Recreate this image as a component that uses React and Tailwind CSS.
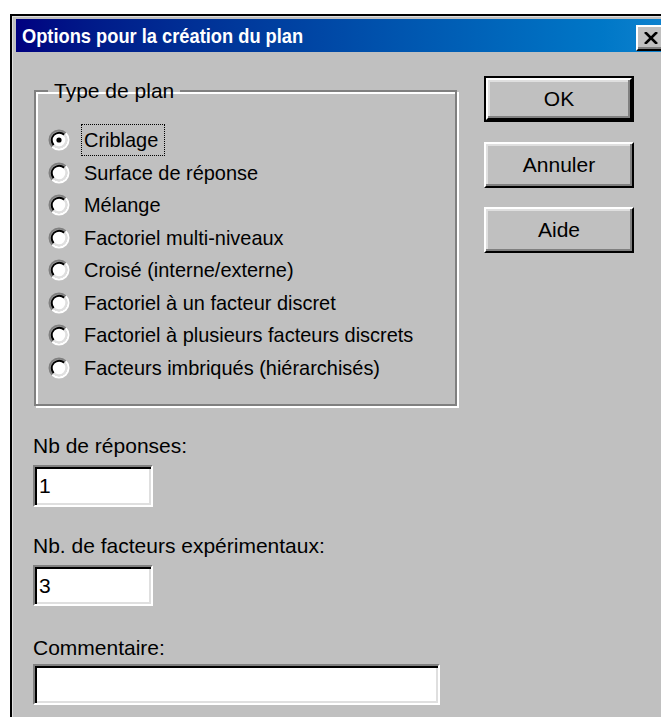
import { useState } from 'react'

const planTypes = [
  'Criblage',
  'Surface de réponse',
  'Mélange',
  'Factoriel multi-niveaux',
  'Croisé (interne/externe)',
  'Factoriel à un facteur discret',
  'Factoriel à plusieurs facteurs discrets',
  'Facteurs imbriqués (hiérarchisés)',
]

function RadioDot({ checked }) {
  return (
    <svg width="22" height="22" viewBox="0 0 22 22" className="shrink-0">
      <circle cx="11" cy="11" r="8" fill="#fff" />
      <path d="M4.28 17.72 A9.5 9.5 0 0 1 17.72 4.28" fill="none" stroke="#808080" strokeWidth="2" />
      <path d="M17.72 4.28 A9.5 9.5 0 0 1 4.28 17.72" fill="none" stroke="#fff" strokeWidth="2" />
      <path d="M5.7 16.3 A7.5 7.5 0 0 1 16.3 5.7" fill="none" stroke="#000" strokeWidth="2" />
      <path d="M16.3 5.7 A7.5 7.5 0 0 1 5.7 16.3" fill="none" stroke="#dfdfdf" strokeWidth="2" />
      {checked && <circle cx="11" cy="11" r="2.6" fill="#000" />}
    </svg>
  )
}

function Button({ children, isDefault }) {
  return (
    <div className={isDefault ? 'border-2 border-black' : ''}>
      <button
        className={
          'w-full flex items-center justify-center bg-[#c0c0c0] border-2 border-t-white border-l-white border-r-black border-b-black shadow-[inset_-2px_-2px_0_#808080,inset_2px_2px_0_#dfdfdf] ' +
          (isDefault ? 'h-[42px]' : 'h-[46px]')
        }
      >
        {children}
      </button>
    </div>
  )
}

function Field({ value, className }) {
  return (
    <div
      className={
        'bg-white border-2 border-t-[#808080] border-l-[#808080] border-r-white border-b-white shadow-[inset_2px_2px_0_#000,inset_-2px_-2px_0_#dfdfdf] flex items-center pl-[4px] ' +
        className
      }
    >
      {value}
    </div>
  )
}

export default function App() {
  const [plan, setPlan] = useState(0)

  return (
    <div className="w-[661px] h-[717px] bg-white overflow-hidden pt-[14px] pl-[10px] font-['Liberation_Sans',Arial,sans-serif] text-[21px] text-black">
      <div className="w-[720px] h-[720px] border-t-2 border-l-2 border-black">
        <div className="h-full border-t border-l border-[#dfdfdf] pt-[2px] pl-[3px] bg-[#c0c0c0]">
          {/* title bar */}
          <div className="h-[33px] flex items-center justify-between bg-gradient-to-r from-[#000080] to-[#1084d0] pl-[6px] w-[660px]">
            <span className="inline-block origin-left scale-x-[0.87] text-white font-bold text-[21px] whitespace-nowrap">
              Options pour la création du plan
            </span>
            <div className="w-[30px] h-[26px] mr-[10px] mt-[4px] bg-[#c0c0c0] border-2 border-t-white border-l-white border-r-black border-b-black shadow-[inset_-2px_-2px_0_#808080] flex items-center justify-center">
              <svg width="14" height="12" viewBox="0 0 14 12">
                <path d="M1 0 L13 12 M13 0 L1 12" stroke="#000" strokeWidth="2.6" />
              </svg>
            </div>
          </div>

          <div className="flex pl-[18px]">
            <div className="w-[423px] pt-[27px]">
              <fieldset className="border-2 border-[#808080] shadow-[inset_2px_2px_0_#fff,2px_2px_0_#fff] pl-[12px] h-[327px]">
                <legend className="px-[6px] leading-[24px]">Type de plan</legend>
                <div className="pt-[21px]">
                  {planTypes.map((label, i) => (
                    <div key={label} className="h-[32.5px] flex items-center cursor-default" onClick={() => setPlan(i)}>
                      <RadioDot checked={plan === i} />
                      <span
                        className={
                          'ml-[11px] px-[2px] leading-[30px] border whitespace-nowrap ' +
                          (plan === i ? 'border-dotted border-black' : 'border-transparent')
                        }
                      >
                        <span className="inline-block origin-left scale-x-[0.95]">{label}</span>
                      </span>
                    </div>
                  ))}
                </div>
              </fieldset>

              <div className="mt-[28px] ml-[-1px]">
                <div className="leading-[24px]">Nb de réponses:</div>
                <Field value="1" className="mt-[7px] w-[120px] h-[42px]" />
                <div className="leading-[24px] mt-[27px]">Nb. de facteurs expérimentaux:</div>
                <Field value="3" className="mt-[7px] w-[120px] h-[41px]" />
                <div className="leading-[24px] mt-[30px]">Commentaire:</div>
                <Field value="" className="mt-[4px] w-[407px] h-[41px]" />
              </div>
            </div>

            <div className="ml-[27px] w-[150px] pt-[24px] flex flex-col">
              <Button isDefault>OK</Button>
              <div className="mt-[20px]">
                <Button>Annuler</Button>
              </div>
              <div className="mt-[19px]">
                <Button>Aide</Button>
              </div>
            </div>
          </div>
        </div>
      </div>
    </div>
  )
}
